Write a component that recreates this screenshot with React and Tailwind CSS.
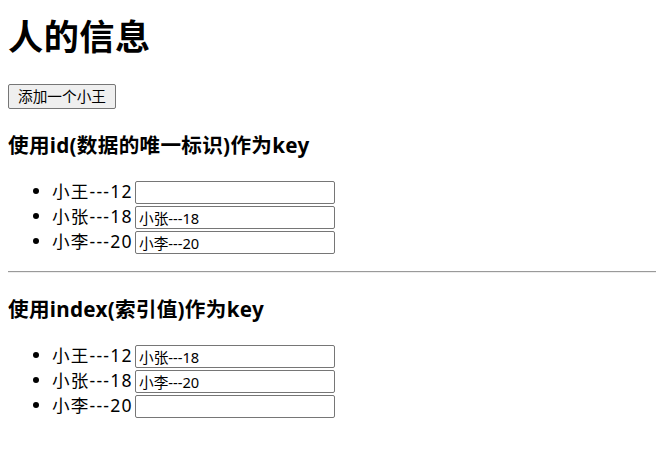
import React, { useState } from 'react';

const font = 'font-["Noto_Sans","Noto_Sans_CJK_SC",sans-serif]';

function Row({ name, age, value }) {
  return (
    <li className="h-[25px] leading-[25px] text-[17.6px]">
      <span className="inline-block w-[83px] align-middle leading-[25px] tracking-[1.2px] relative top-[-1px]">{name}---{age}</span>
      <input
        type="text"
        defaultValue={value}
        className={`inline-block align-middle w-[200px] h-[23px] border border-[#767676] rounded-[2px] px-[3px] text-[14.67px] leading-[21px] bg-white outline-none ${font}`}
      />
    </li>
  );
}

export default function App() {
  const [persons] = useState([
    { id: '001', name: '小王', age: 12 },
    { id: '002', name: '小张', age: 18 },
    { id: '003', name: '小李', age: 20 },
  ]);

  return (
    <div className={`bg-white text-black min-h-[468px] w-[656px] overflow-hidden pl-2 ${font}`}>
      <h1 className="pt-[15px] text-[35.2px] font-bold leading-[42px] tracking-[0.5px]">人的信息</h1>
      <div className="mt-[27px] h-[25px]">
        <button className="h-[25px] px-[9px] border border-[#767676] rounded-[2px] bg-[#efefef] text-[14.67px] leading-[21px]">
          添加一个小王
        </button>
      </div>

      <h3 className="mt-[24px] text-[20.6px] font-bold leading-[25px] tracking-[0.3px]">使用id(数据的唯一标识)作为key</h3>
      <ul className="mt-[20px] list-disc pl-[44px]">
        <Row name="小王" age={12} value="" />
        <Row name="小张" age={18} value="小张---18" />
        <Row name="小李" age={20} value="小李---20" />
      </ul>

      <hr className="mt-[18px] border-0 border-t border-t-[#9a9a9a] border-b border-b-[#eeeeee] w-[660px]" />

      <h3 className="mt-[24px] text-[20.6px] font-bold leading-[25px] tracking-[0.3px]">使用index(索引值)作为key</h3>
      <ul className="mt-[20px] list-disc pl-[44px]">
        <Row name={persons[0].name} age={persons[0].age} value="小张---18" />
        <Row name={persons[1].name} age={persons[1].age} value="小李---20" />
        <Row name={persons[2].name} age={persons[2].age} value="" />
      </ul>
    </div>
  );
}
